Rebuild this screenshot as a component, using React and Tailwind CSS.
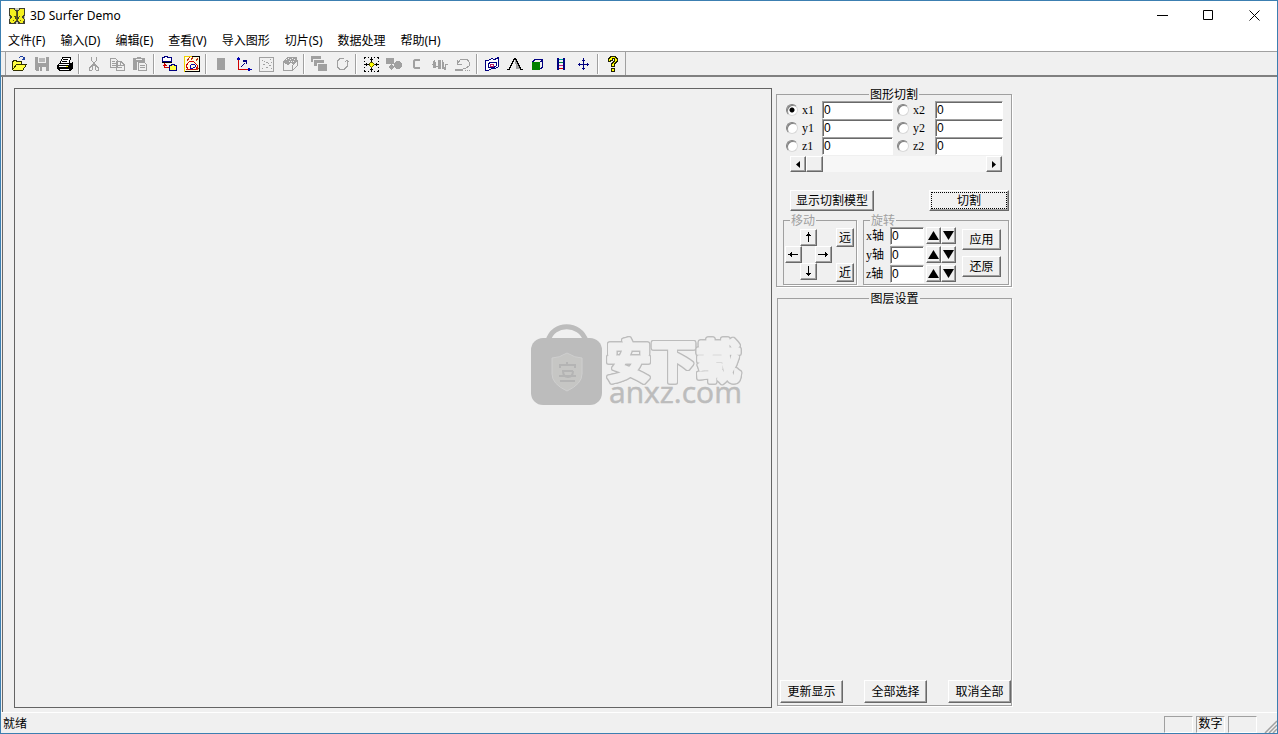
import { useState } from 'react'
import clsx from 'clsx'

const menus = ['文件(F)', '输入(D)', '编辑(E)', '查看(V)', '导入图形', '切片(S)', '数据处理', '帮助(H)']

function Icon({ children }) {
  return (
    <svg width="18" height="18" viewBox="-1 -1 18 18" fill="none" shapeRendering="crispEdges" aria-hidden="true">
      {children}
    </svg>
  )
}

const gray = '#a0a0a0'
const navy = '#000080'

const toolGroups = [
  [
    {
      name: '打开',
      icon: (
        <>
          <path d="M8 1.500h1M9 .500h3M12 1.500h1M13.500 1v3M11 3.500h3M12 2.500h1" stroke="#2040a0" />
          <path d="M1 14V5h1V4h3v1h6v3h4l-3 6z" fill="#ffff40" />
          <path d="M1.5 14V5.500h1v-1h3v1h5v3M1.5 14.500h10l4-6h-10l-4 5.500" stroke="#303000" />
        </>
      ),
    },
    {
      name: '保存',
      icon: (
        <>
          <path d="M1 1h14v14H2l-1-1z" fill={gray} />
          <path d="M4 1h8v6H4zM5 11h7v4H5z" fill="#f0f0f0" />
          <path d="M5 2h6v4H5z" fill="#b8b8b8" />
          <path d="M6 11h2v4H6z" fill={gray} />
        </>
      ),
    },
    {
      name: '打印',
      icon: (
        <>
          <path d="M5 1h9l-2 6H3z" fill="#fff" />
          <path d="M5.500 1v2M5 1.500h9M13.500 2v2M12.500 4v3M4.500 3v2M3.500 5v2M6 3.500h5M5 5.500h5" stroke="#000" />
          <path d="M2 7h12l2-1v6l-3 3H2l-2-2V9z" fill="#000" />
          <path d="M2 8.500h10M2 10.500h9M3 13.500h9" stroke="#fff" />
          <path d="M9 10h2v1H9z" fill="#ff0" />
        </>
      ),
    },
  ],
  [
    {
      name: '剪切',
      icon: (
        <path
          d="M5.500 1v3l2 3v3M10.500 1v3l-2 3v3M7.500 8l-2 2M8.500 8l2 2M3.500 11.500h1v-1h2v3l-1 1h-2zM9.500 10.500h2v1h1v3h-2l-1-1z"
          stroke={gray}
        />
      ),
    },
    {
      name: '复制',
      icon: (
        <path
          d="M1.500 2.500h5l2 2v7h-7zM7 5.500h5l3 3v6H7.500V5M3 5.500h3M3 7.500h4M3 9.500h4M9 9.500h4M9 11.500h4M11.500 6v3h3"
          stroke={gray}
        />
      ),
    },
    {
      name: '粘贴',
      icon: (
        <>
          <path d="M1 2h4V1h4v1h4v5h-2V6H5v8H1z" fill={gray} />
          <path d="M4 3h6v1H4z" fill="#f0f0f0" />
          <path d="M6.500 6.500h6l2 2v6h-8zM8 9.500h5M8 11.500h5" stroke={gray} fill="#f0f0f0" />
        </>
      ),
    },
  ],
  [
    {
      name: '加载数据',
      icon: (
        <>
          <path d="M1.500 1.500h2v-1h3v1h4v4h-9z" fill="#fff" stroke={navy} />
          <path d="M1 6.500h10" stroke="#000" />
          <path d="M3.500 7v5M4 11.500h4M1.500 9.500h4M2.500 8.500h2" stroke="#d00000" />
          <path d="M8.500 14.500v-5h2v-1h3v1h2v5z" fill="#ffff40" stroke={navy} />
        </>
      ),
    },
    {
      name: '等值线',
      icon: (
        <>
          <path d="M.5.500h15v15H.5z" fill="#fffbe0" stroke="#000" />
          <path d="M0 0h8v1H1v15H0z" fill="#f0d000" />
          <path d="M2 10l2-3 2-2h3l3 3 2 2-2 3-4 1-4-1z" stroke="#d00000" />
          <path d="M6 10l2-2 3 1v2l-2 1H6z" stroke="#0000b0" />
          <path d="M7 4l2-3M3 5l3-4M12 5l2-3M12 14l3-2M2 14l2-1" stroke="#c03010" />
        </>
      ),
    },
  ],
  [
    { name: '停止', icon: <path d="M4 2h8v12H4z" fill={gray} /> },
    {
      name: '坐标轴',
      icon: (
        <>
          <path d="M2.500 4v10M2 13.500h11" stroke="#d00000" />
          <path d="M2 1h1v1h1v2H1V2h1zM12 12h2v1h2v1h-2v1h-2z" fill="#0000b0" />
          <path d="M5 10.500h1M6 9.500h1M7 8.500h1M8 7.500h1" stroke={navy} />
          <path d="M7 4h4v4h-1V6H7z" fill={navy} />
        </>
      ),
    },
    {
      name: '散点图',
      icon: (
        <>
          <path d="M.5 1.500h14v14H.5z" stroke={gray} />
          <path d="M3 4.500h1M11 3.500h1M7 6.500h2M12 6.500h1M4 8.500h2M10 9.500h2M3 12.500h1M7 11.500h2M12 12.500h1M5.500 5v1M9.500 7v1" stroke={gray} />
        </>
      ),
    },
    {
      name: '三维曲面',
      icon: (
        <>
          <path d="M1 6l4-5h10v4l-4 4-2-2-3 2-3-1z" fill={gray} />
          <path d="M4 3h1M6 2h1M8 3h1M10 2h1M12 3h1M7 5h1M9 5h1M11 5h1" stroke="#f0f0f0" />
          <path d="M1.500 6v8.500h9V9M11 14l4-4V4" stroke={gray} />
        </>
      ),
    },
  ],
  [
    {
      name: '图层',
      icon: (
        <>
          <path d="M0 0h10v6H0zM3 4h10v6H3zM7 8h9v7H7z" fill={gray} />
          <path d="M2.500 6V3.500h8M6.500 10V7.500h7" stroke="#f0f0f0" />
        </>
      ),
    },
    {
      name: '旋转图形',
      icon: <path d="M10 2.500H6l-3 3v5l3 3h4l3-3V5M10.500 6.500l2-2h1l2 2" stroke={gray} />,
    },
  ],
  [
    {
      name: '中心',
      icon: (
        <>
          <path d="M8.500 1v5M8.500 11v5M1 8.500h5M11 8.500h5" stroke="#000" />
          <path d="M7 3.500h3M7 13.500h3M3.500 7v3M13.500 7v3" stroke="#000" />
          <path d="M1.500 3V1.500H3M14 1.500h1.500V3M1.500 14v1.500H3M14 15.500h1.500V14M1 5.500h1M15 5.500h1M5 1.500h1M11 1.500h1M5 15.500h1M11 15.500h1M1 11.500h1M15 11.500h1" stroke="#000" />
          <path d="M8 6h1l2 2v1l-2 2H8L6 9V8z" fill="#ffff00" stroke="#606000" />
        </>
      ),
    },
    {
      name: '形状',
      icon: (
        <>
          <path d="M0 2h8v6H0zM2 11l3-3 3 3-3 3z" fill={gray} />
          <circle cx="12" cy="9" r="4" fill={gray} />
        </>
      ),
    },
    {
      name: '颜色',
      icon: <path d="M10 5V4H6L5 5v6l1 1h4v-1" stroke={gray} strokeWidth="2" shapeRendering="auto" />,
    },
    {
      name: '波形',
      icon: (
        <>
          <path d="M0 8.500h1.500V5v6h1V4v7h1V6v4h2M10.500 4v8h1V6v5h1v2h1V8h2" stroke={gray} />
          <path d="M6 4h3v9H6z" fill={gray} />
        </>
      ),
    },
    {
      name: '撤消',
      icon: (
        <>
          <path d="M3 7l3-4h6l2 3v4l-3 2H8M2.500 4v4H7" stroke={gray} />
          <path d="M0 13h8v2H0z" fill={gray} />
          <path d="M10 14.500h1M12 14.500h1M14 14.500h1" stroke={gray} />
        </>
      ),
    },
  ],
  [
    {
      name: '网格',
      icon: (
        <>
          <path d="M1.500 4.500h3l3-2 3 1 4-2v9l-3 2-4 0-3 2h-3z" fill="#fff" stroke={navy} />
          <path d="M4 11.500V8l3-2h5v4l-3 2z" stroke={navy} />
          <path d="M6 8.500h3v2H6z" stroke="#c02060" />
        </>
      ),
    },
    {
      name: '山峰',
      icon: (
        <>
          <path d="M8 3l5 10H9z" fill={gray} />
          <path d="M0 13.500h2v-2h1v-2h1v-2h1v-2h1v-2h1v-1h1v1h1v2h1v2h1v2h1v2h1v2h3" stroke="#000" />
        </>
      ),
    },
    {
      name: '立方体',
      icon: (
        <>
          <path d="M2 6h8v8H2z" fill="#008000" />
          <path d="M2.500 6l3-3h7v8l-2 2M10 5.500h1l2-2" stroke={navy} />
        </>
      ),
    },
    {
      name: '色标',
      icon: (
        <>
          <path d="M5 3.500h6" stroke="#00a0a0" />
          <path d="M5 6.500h6" stroke="#008040" />
          <path d="M5 9.500h6" stroke="#c02080" />
          <path d="M5 12.500h6" stroke="#d00000" />
          <path d="M4 2h2v12H4zM10 2h2v12h-2z" fill={navy} />
        </>
      ),
    },
    {
      name: '移动',
      icon: (
        <path d="M7.500 2v12M2 8.500h11M6 4.500h3M6 12.500h3M3.500 7v3M11.500 7v3" stroke={navy} />
      ),
    },
  ],
  [
    {
      name: '帮助',
      icon: (
        <>
          <path
            d="M3.500 5.500v-3h1v-1h1v-1h5v1h1v1h1v3h-1v1h-1v1h-1v3h-3v-3h1v-1h1v-1h1v-3h-2v2z"
            fill="#ffff00"
            stroke="#202000"
          />
          <path d="M6.500 12.500h3v3h-3z" fill="#ffff00" stroke="#202000" />
        </>
      ),
    },
  ],
]

const raised =
  'border border-t-white border-l-white border-r-[#696969] border-b-[#696969] bg-[#f0f0f0] shadow-[inset_-1px_-1px_0_#a0a0a0]'
const sunken =
  'border border-t-[#a0a0a0] border-l-[#a0a0a0] border-r-white border-b-white bg-white shadow-[inset_1px_1px_0_#696969]'

function PushButton({ className, children, ...props }) {
  return (
    <button type="button" className={clsx('flex items-center justify-center leading-none', raised, className)} {...props}>
      {children}
    </button>
  )
}

function ArrowButton({ label, path, className }) {
  return (
    <PushButton aria-label={label} className={clsx('h-[17px] w-[17px]', className)}>
      <svg width="13" height="13" viewBox="0 0 13 13" fill="none" stroke="#000" shapeRendering="crispEdges">
        <path d={path} />
      </svg>
    </PushButton>
  )
}

function Group({ title, className, legendClass, children }) {
  return (
    <fieldset className={clsx('border border-[#a0a0a0] shadow-[1px_1px_0_#fff]', className)}>
      <legend className={clsx('h-[14px] px-px leading-[16px]', legendClass)}>{title}</legend>
      {children}
    </fieldset>
  )
}

function PlaneField({ name, selected, onSelect, value, onChange, inputClass }) {
  return (
    <>
      <label className="flex items-center">
        <input
          type="radio"
          name="plane"
          checked={selected}
          onChange={onSelect}
          className="h-3 w-3 appearance-none rounded-full border border-t-[#808080] border-l-[#808080] border-r-[#d8d8d8] border-b-[#d8d8d8] bg-white shadow-[inset_1px_1px_0_#808080] checked:bg-[radial-gradient(circle,#000_2px,#fff_3px)]"
        />
        <span className="ml-1 font-['Liberation_Serif',serif]">{name}</span>
      </label>
      <input
        type="text"
        aria-label={name}
        value={value}
        onChange={onChange}
        className={clsx('h-[18px] min-w-0 px-px', sunken, inputClass)}
      />
    </>
  )
}

function Toolbar() {
  return (
    <div className="flex h-[26px] shrink-0 border-t border-b-2 border-t-[#a0a0a0] border-b-[#808080] bg-[#f0f0f0] pl-1">
      <div className="flex items-center border-x border-[#a0a0a0] px-px">
        {toolGroups.map((group, i) => (
          <div key={i} className="flex items-center">
            {i > 0 && <div className="mx-[2px] h-[20px] w-[2px] border-l border-[#a0a0a0] bg-white" />}
            {group.map((tool) => (
              <button key={tool.name} type="button" aria-label={tool.name} className="flex h-[22px] w-[23px] items-center justify-center">
                <Icon>{tool.icon}</Icon>
              </button>
            ))}
          </div>
        ))}
      </div>
    </div>
  )
}

function Watermark() {
  return (
    <div className="pointer-events-none absolute inset-0 flex items-center justify-center pr-[2px] pb-[2px]">
      <svg width="214" height="100" viewBox="0 -8 214 100">
        <path d="M17 17C22-2 49-2 55 17" fill="none" stroke="#bcbcbc" strokeWidth="5" />
        <rect y="14" width="71" height="67" rx="12" fill="#bcbcbc" />
        <path d="M36 29q8 5 15 5v16q0 10-15 17q-15-7-15-17V34q7 0 15-5z" fill="#c6c6c4" stroke="#cfcfcf" />
        <path d="M29 44v-3h15v3M36 38v3M31 47h11M32 47q0 6 5 6t5-6M28 52h17M29 57h15" fill="none" stroke="#b4b4b4" strokeWidth="2" />
        <text
          x="75"
          y="54"
          fontSize="45"
          fontWeight="700"
          fill="#f0f0f0"
          stroke="#f0f0f0"
          strokeWidth="3"
          strokeLinejoin="round"
          className="font-['Noto_Sans_CJK_SC',sans-serif] [filter:drop-shadow(1px_0_0_#bcbcbc)_drop-shadow(-1px_0_0_#bcbcbc)_drop-shadow(0_1px_0_#bcbcbc)_drop-shadow(0_-1px_0_#bcbcbc)]"
        >
          安下载
        </text>
        <text x="78" y="79" fontSize="30" fill="#bcbcbc" stroke="#bcbcbc" strokeWidth="0.5" className="font-['Open_Sans',sans-serif]">
          anxz.com
        </text>
      </svg>
    </div>
  )
}

export default function App() {
  const [plane, setPlane] = useState('x1')
  const [bounds, setBounds] = useState({ x1: '0', x2: '0', y1: '0', y2: '0', z1: '0', z2: '0' })
  const [angles, setAngles] = useState({ x: '0', y: '0', z: '0' })

  const turn = (axis, step) => {
    setAngles({ ...angles, [axis]: String(Number(angles[axis]) + step) })
  }

  const planeProps = (name) => ({
    name,
    selected: plane === name,
    onSelect: () => setPlane(name),
    value: bounds[name],
    onChange: (e) => setBounds({ ...bounds, [name]: e.target.value }),
  })

  return (
    <div className="relative flex h-screen flex-col border border-[#3c7fb1] bg-[#f0f0f0] font-['Liberation_Sans','Noto_Sans_CJK_SC',sans-serif] text-[12px] text-black">
      <header className="flex h-[29px] shrink-0 items-center bg-white pl-2">
        <svg width="16" height="16" viewBox="0 0 16 16" shapeRendering="crispEdges" aria-hidden="true">
          <path d="M0 0h16v16H0z" fill="#404030" />
          <path d="M1 1h4l2 3v3l-1 3 1 2-2 3H2l-1-3 2-3-2-3zM15 1h-4L9 4v3l1 3-1 2 2 3h3l1-3-2-3 2-3z" fill="#f4f020" />
          <path d="M6 0h4v2H6zM0 8h1v3H0zM15 8h1v3h-1zM7 14h2v2H7z" fill="#c8c8b8" />
          <path d="M7.500 4v9M5 8l1 1M11 8l-1 1M4 12h1M11 12h1" stroke="#686000" fill="none" />
        </svg>
        <h1 className="ml-[5px] font-['Noto_Sans','Noto_Sans_CJK_SC',sans-serif]">3D Surfer Demo</h1>
        <div className="ml-auto flex h-full">
          {[
            ['最小化', 'M0 5.500h11'],
            ['最大化', 'M.5.500h9v9h-9z'],
            ['关闭', 'M.5.500l10 10M10.500.500l-10 10'],
          ].map(([label, d]) => (
            <button key={label} type="button" aria-label={label} className="flex w-[46px] items-center justify-center">
              <svg width="11" height="11" viewBox="0 0 11 11" fill="none" stroke="#000">
                <path d={d} />
              </svg>
            </button>
          ))}
        </div>
      </header>

      <nav className="flex h-[21px] shrink-0 items-center gap-px bg-white font-['Noto_Sans','Noto_Sans_CJK_SC',sans-serif]">
        {menus.map((m) => (
          <button key={m} type="button" className="px-[7px] leading-[18px]">
            {m}
          </button>
        ))}
      </nav>

      <Toolbar />

      <main className="mx-px flex min-h-0 flex-1 border-l border-[#696969] pt-[10px] pb-1 pl-[11px]">
        <section className="mt-px flex-1 border border-[#646464]" aria-label="视图" />

        <aside className="mr-[264px] ml-1 flex w-[236px] shrink-0 flex-col">
          <Group title="图形切割" legendClass="mx-auto" className="pb-px">
            <div className="ml-[9px] grid grid-cols-[36px_75px_38px_68px]">
              {['x', 'y', 'z'].map((axis) => (
                <div key={axis} className="contents">
                  <PlaneField {...planeProps(axis + '1')} inputClass="mr-1" />
                  <PlaneField {...planeProps(axis + '2')} />
                </div>
              ))}
            </div>

            <div className="mt-px mr-[9px] ml-[13px] flex h-4 bg-[#f7f7f7]">
              <PushButton aria-label="向左滚动" className="w-4">
                <svg width="4" height="7" viewBox="0 0 4 7">
                  <path d="M4 0v7L0 3.500z" />
                </svg>
              </PushButton>
              <PushButton aria-label="滑块" className="w-[17px]" />
              <PushButton aria-label="向右滚动" className="ml-auto w-4">
                <svg width="4" height="7" viewBox="0 0 4 7">
                  <path d="M0 0v7l4-3.500z" />
                </svg>
              </PushButton>
            </div>

            <div className="mt-[18px] mr-[2px] ml-[13px] flex justify-between">
              <PushButton className="h-[21px] w-[84px]">显示切割模型</PushButton>
              <PushButton className="h-[21px] w-[80px] p-px">
                <span className="flex h-full w-full items-center justify-center border border-dotted border-black">切割</span>
              </PushButton>
            </div>

            <div className="mt-[2px] mr-[2px] ml-[6px] flex justify-between">
              <Group title="移动" className="w-[74px]" legendClass="ml-[6px] text-[#a0a0a0]">
                <div className="ml-px flex h-[56px] gap-1">
                  <div className="mt-[2px] grid h-[51px] grid-cols-[15px_15px_17px]">
                    <ArrowButton label="上移" path="M6.500 1v10M5 3.500h3M4 4.500h5" className="col-start-2" />
                    <ArrowButton label="左移" path="M1 6.500h10M3.500 5v3M4.500 4v5" className="col-start-1 row-start-2" />
                    <ArrowButton label="右移" path="M1 6.500h10M9.500 5v3M8.500 4v5" className="col-start-3 row-start-2" />
                    <ArrowButton label="下移" path="M6.500 1v10M5 9.500h3M4 8.500h5" className="col-start-2 row-start-3" />
                  </div>
                  <div className="mt-px flex h-[54px] flex-col justify-between">
                    <PushButton className="h-[19px] w-[18px]">远</PushButton>
                    <PushButton className="h-[19px] w-[18px]">近</PushButton>
                  </div>
                </div>
              </Group>

              <Group title="旋转" className="w-[146px]" legendClass="ml-[6px] text-[#a0a0a0]">
                <div className="flex">
                  <div className="ml-[2px]">
                    {['x', 'y', 'z'].map((axis) => (
                      <div key={axis} className="flex h-[19px] items-start">
                        <label htmlFor={'angle-' + axis} className="w-[24px] font-['Liberation_Serif','Noto_Sans_CJK_SC',serif] leading-[18px]">
                          {axis}轴
                        </label>
                        <input
                          id={'angle-' + axis}
                          type="text"
                          value={angles[axis]}
                          onChange={(e) => setAngles({ ...angles, [axis]: e.target.value })}
                          className={clsx('mr-[2px] h-[18px] w-[34px] px-px', sunken)}
                        />
                        <PushButton aria-label={axis + '轴增加'} className="h-[17px] w-[15px]" onClick={() => turn(axis, 1)}>
                          <svg width="11" height="9" viewBox="0 0 11 9">
                            <path d="M5.500 0L11 9H0z" />
                          </svg>
                        </PushButton>
                        <PushButton aria-label={axis + '轴减少'} className="h-[17px] w-[15px]" onClick={() => turn(axis, -1)}>
                          <svg width="11" height="9" viewBox="0 0 11 9">
                            <path d="M0 0h11L5.500 9z" />
                          </svg>
                        </PushButton>
                      </div>
                    ))}
                  </div>
                  <div className="mt-[2px] ml-[6px] flex flex-col gap-[6px]">
                    <PushButton className="h-[21px] w-[39px]">应用</PushButton>
                    <PushButton className="h-[21px] w-[39px]">还原</PushButton>
                  </div>
                </div>
              </Group>
            </div>
          </Group>

          <Group title="图层设置" legendClass="mx-auto" className="mt-1 mb-[2px] ml-px flex flex-1 flex-col">
            <div className="mt-auto mb-[2px] ml-[2px] flex justify-between">
              <PushButton className="h-[23px] w-[63px]">更新显示</PushButton>
              <PushButton className="h-[23px] w-[63px]">全部选择</PushButton>
              <PushButton className="h-[23px] w-[63px]">取消全部</PushButton>
            </div>
          </Group>
        </aside>
      </main>

      <footer className="flex h-[21px] shrink-0 items-center border-t border-white pt-[2px] pl-[2px]">
        <span>就绪</span>
        <div className="ml-auto flex h-[17px] gap-[3px]">
          <span className="w-[29px] border border-t-[#a0a0a0] border-r-white border-b-white border-l-[#a0a0a0]" />
          <span className="w-[29px] border border-t-[#a0a0a0] border-r-white border-b-white border-l-[#a0a0a0] text-center leading-[15px]">
            数字
          </span>
          <span className="w-[29px] border border-t-[#a0a0a0] border-r-white border-b-white border-l-[#a0a0a0]" />
        </div>
        <svg width="13" height="13" viewBox="0 0 13 13" className="mt-auto ml-[7px]" stroke="#a0a0a0" strokeWidth="1.500" aria-hidden="true">
          <path d="M1 13L13 1M5 13l8-8M9 13l4-4" />
        </svg>
      </footer>

      <Watermark />
    </div>
  )
}
